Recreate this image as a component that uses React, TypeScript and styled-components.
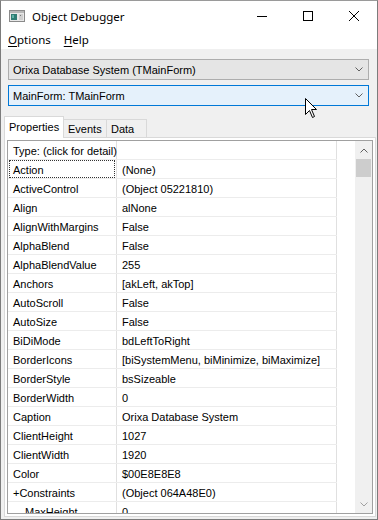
import React from "react";
import styled, { createGlobalStyle } from "styled-components";

const GlobalStyle = createGlobalStyle`
  html, body { margin: 0; padding: 0; background: #ffffff; }
  body { font-family: "Liberation Sans", Arial, sans-serif; }
  * { box-sizing: border-box; }
`;

const Window = styled.div`
  position: relative;
  width: 378px;
  height: 520px;
  border: 1px solid #7c7c7c;
  border-top-color: #9a9a9a;
  background: #f0f0f0;
  display: flex;
  flex-direction: column;
  overflow: hidden;
`;

const TitleBar = styled.div`
  height: 29px;
  flex: none;
  background: #ffffff;
  display: flex;
  align-items: center;
  padding-left: 8px;
`;

const TitleText = styled.span`
  font-family: "Noto Sans", "Open Sans", sans-serif;
  font-size: 11.5px;
  color: #000;
  margin-left: 7px;
  flex: 1;
  padding-top: 1px;
`;

const CaptionButton = styled.div`
  width: 46px;
  height: 29px;
  display: flex;
  align-items: center;
  justify-content: center;
`;

const MenuBar = styled.div`
  height: 19px;
  flex: none;
  background: #ffffff;
  display: flex;
  align-items: center;
  padding-left: 1px;
`;

const MenuItem = styled.span`
  font-family: "Noto Sans", "Open Sans", sans-serif;
  font-size: 11.5px;
  padding: 0 7px 1px 6px;
  color: #000;
  & u { text-decoration: underline; text-underline-offset: 2px; }
`;

const Body = styled.div`
  flex: 1;
  display: flex;
  flex-direction: column;
  padding: 10px 1px 2px 3px;
  min-height: 0;
`;

const Combo = styled.div<{ $active?: boolean }>`
  height: 21px;
  margin: 0 7px 0 4px;
  flex: none;
  border: 1px solid ${(p) => (p.$active ? "#0078d7" : "#adadad")};
  background: ${(p) => (p.$active ? "#e5f1fb" : "#e5e5e5")};
  display: flex;
  align-items: center;
  padding: 0 5px 0 4px;
  font-size: 11px;
  color: #000;
  & + & { margin-top: 5px; }
`;

const ComboText = styled.span`
  flex: 1;
  white-space: nowrap;
  padding-top: 1px;
`;

const TabStrip = styled.div`
  margin-top: 11px;
  height: 21px;
  flex: none;
  display: flex;
  align-items: flex-end;
  position: relative;
  z-index: 1;
  margin-bottom: -1px;
`;

const Tab = styled.div<{ $selected?: boolean; $w: number }>`
  width: ${(p) => p.$w}px;
  height: ${(p) => (p.$selected ? 22 : 19)}px;
  border: 1px solid #d9d9d9;
  border-bottom: ${(p) => (p.$selected ? "none" : "1px solid #d9d9d9")};
  background: ${(p) => (p.$selected ? "#ffffff" : "#f0f0f0")};
  margin-left: ${(p) => (p.$selected ? 0 : -1)}px;
  font-size: 11px;
  color: #000;
  padding-left: 4px;
  padding-top: ${(p) => (p.$selected ? 4 : 3)}px;
  white-space: nowrap;
`;

const Panel = styled.div`
  flex: 1;
  min-height: 0;
  background: #ffffff;
  border: 1px solid #d9d9d9;
  padding: 2px;
  display: flex;
`;

const Grid = styled.div`
  flex: 1;
  border: 1px solid #a0a0a0;
  background: #ffffff;
  display: flex;
  overflow: hidden;
`;

const Table = styled.div`
  width: 329px;
  flex: none;
  display: flex;
  flex-direction: column;
`;

const Row = styled.div`
  height: 19px;
  flex: none;
  display: flex;
  border-bottom: 1px solid #ececec;
  font-size: 11px;
  color: #000;
`;

const NameCell = styled.div<{ $focused?: boolean; $indent?: number }>`
  width: 109px;
  flex: none;
  border-right: 1px solid #e0e0e0;
  padding-left: ${(p) => 5 + (p.$indent || 0)}px;
  padding-top: 1px;
  display: flex;
  align-items: center;
  white-space: nowrap;
  position: relative;
  ${(p) =>
    p.$focused
      ? `&::after { content: ""; position: absolute; left: 1px; top: 0; right: 1px; bottom: 0; border: 1px dotted #333; }`
      : ""}
`;

const ValueCell = styled.div`
  flex: 1;
  border-right: 1px solid #e0e0e0;
  padding-left: 5px;
  padding-top: 1px;
  display: flex;
  align-items: center;
  white-space: nowrap;
  overflow: hidden;
`;

const Filler = styled.div`
  flex: 1;
`;

const ScrollBar = styled.div`
  width: 17px;
  flex: none;
  background: #f0f0f0;
  display: flex;
  flex-direction: column;
  align-items: center;
`;

const ScrollArrow = styled.div`
  width: 17px;
  height: 18px;
  flex: none;
  display: flex;
  align-items: center;
  justify-content: center;
`;

const Thumb = styled.div`
  width: 15px;
  height: 18px;
  flex: none;
  background: #cdcdcd;
`;

const Track = styled.div`
  flex: 1;
`;

const Cursor = styled.svg`
  position: absolute;
  left: 303px;
  top: 96px;
  pointer-events: none;
`;

const Chevron = ({ up, color = "#606060" }: { up?: boolean; color?: string }) => (
  <svg width="8" height="5" viewBox="0 0 8 5">
    <polyline
      points={up ? "0.5,4.5 4,1 7.5,4.5" : "0.5,0.5 4,4 7.5,0.5"}
      fill="none"
      stroke={color}
      strokeWidth="1"
    />
  </svg>
);

const AppIcon = () => (
  <svg width="16" height="12" viewBox="0 0 16 12">
    <rect x="0.5" y="0.5" width="15" height="11" fill="#e8e8e8" stroke="#8a8a8a" />
    <rect x="1" y="1" width="14" height="2" fill="#b8b8b8" />
    <rect x="2" y="4" width="6" height="6" fill="#2f7d74" />
    <rect x="3" y="5" width="2" height="3" fill="#5fb3a6" />
    <rect x="10" y="4" width="4" height="6" fill="#cfcfcf" />
    <rect x="11" y="5" width="1" height="1" fill="#7a7a7a" />
  </svg>
);

const rows: [string, string, number?][] = [
  ["Action", "(None)"],
  ["ActiveControl", "(Object 05221810)"],
  ["Align", "alNone"],
  ["AlignWithMargins", "False"],
  ["AlphaBlend", "False"],
  ["AlphaBlendValue", "255"],
  ["Anchors", "[akLeft, akTop]"],
  ["AutoScroll", "False"],
  ["AutoSize", "False"],
  ["BiDiMode", "bdLeftToRight"],
  ["BorderIcons", "[biSystemMenu, biMinimize, biMaximize]"],
  ["BorderStyle", "bsSizeable"],
  ["BorderWidth", "0"],
  ["Caption", "Orixa Database System"],
  ["ClientHeight", "1027"],
  ["ClientWidth", "1920"],
  ["Color", "$00E8E8E8"],
  ["+Constraints", "(Object 064A48E0)"],
  ["MaxHeight", "0", 12],
];

export default function App() {
  return (
    <>
      <GlobalStyle />
      <Window>
        <TitleBar>
          <AppIcon />
          <TitleText>Object Debugger</TitleText>
          <CaptionButton>
            <svg width="10" height="10" viewBox="0 0 10 10">
              <line x1="0" y1="5.5" x2="10" y2="5.5" stroke="#000" strokeWidth="1" />
            </svg>
          </CaptionButton>
          <CaptionButton>
            <svg width="10" height="10" viewBox="0 0 10 10">
              <rect x="0.5" y="0.5" width="9" height="9" fill="none" stroke="#000" strokeWidth="1" />
            </svg>
          </CaptionButton>
          <CaptionButton>
            <svg width="10" height="10" viewBox="0 0 10 10">
              <path d="M0 0 L10 10 M10 0 L0 10" stroke="#000" strokeWidth="1" />
            </svg>
          </CaptionButton>
        </TitleBar>
        <MenuBar>
          <MenuItem>
            <u>O</u>ptions
          </MenuItem>
          <MenuItem>
            <u>H</u>elp
          </MenuItem>
        </MenuBar>
        <Body>
          <Combo>
            <ComboText>Orixa Database System (TMainForm)</ComboText>
            <Chevron />
          </Combo>
          <Combo $active>
            <ComboText>MainForm: TMainForm</ComboText>
            <Chevron />
          </Combo>
          <TabStrip>
            <Tab $selected $w={60}>Properties</Tab>
            <Tab $w={44}>Events</Tab>
            <Tab $w={41}>Data</Tab>
          </TabStrip>
          <Panel>
            <Grid>
              <Table>
                <Row>
                  <NameCell>Type: (click for detail)</NameCell>
                  <ValueCell />
                </Row>
                {rows.map(([n, v, indent], i) => (
                  <Row key={n}>
                    <NameCell $focused={i === 0} $indent={indent}>
                      {n}
                    </NameCell>
                    <ValueCell>{v}</ValueCell>
                  </Row>
                ))}
              </Table>
              <Filler />
              <ScrollBar>
                <ScrollArrow>
                  <Chevron up color="#606060" />
                </ScrollArrow>
                <Thumb />
                <Track />
                <ScrollArrow>
                  <Chevron color="#a0a0a0" />
                </ScrollArrow>
              </ScrollBar>
            </Grid>
          </Panel>
        </Body>
        <Cursor width="14" height="22" viewBox="0 0 14 22">
          <path
            d="M1.5 1.5 L1.5 17.5 L5.5 13.5 L8.5 20.5 L10.5 19.5 L7.5 12.5 L12.5 12.5 Z"
            fill="#ffffff"
            stroke="#000000"
            strokeWidth="1"
            strokeLinejoin="miter"
          />
        </Cursor>
      </Window>
    </>
  );
}
